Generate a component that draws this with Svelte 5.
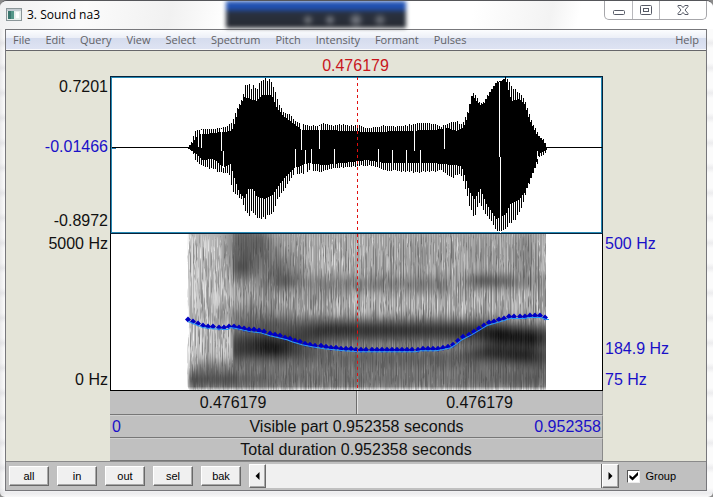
<script>
  import { onMount } from 'svelte';

  const menus = ['File', 'Edit', 'Query', 'View', 'Select', 'Spectrum', 'Pitch', 'Intensity', 'Formant', 'Pulses'];
  const zoomButtons = ['all', 'in', 'out', 'sel', 'bak'];

  let grouped = $state(true);
  let position = $state(50);
  let canvas;

  // Linear interpolation through a list of [x, value] pairs.
  function at(points, x) {
    if (x <= points[0][0]) return points[0][1];
    for (let i = 1; i < points.length; i++) {
      if (x <= points[i][0]) {
        const [x0, y0] = points[i - 1];
        const [x1, y1] = points[i];
        return y0 + ((y1 - y0) * (x - x0)) / (x1 - x0);
      }
    }
    return points[points.length - 1][1];
  }

  function randomSource(seed) {
    let s = seed;
    return () => {
      s = (s * 1664525 + 1013904223) >>> 0;
      return s / 4294967296;
    };
  }

  // Amplitude envelopes: peaks and the level between the peaks, above and below zero.
  const upperPeak = [[77, 70], [80, 64], [84, 53], [86, 52], [103, 51], [112, 50], [120, 46], [123, 38], [127, 28], [131, 21], [134, 7], [137, 6], [140, 10], [143, 5], [145, 13], [148, 5], [152, 0], [159, 0], [162, 10], [165, 17], [168, 27], [173, 36], [178, 36], [183, 43], [190, 46], [205, 49], [212, 45], [222, 48], [232, 46], [240, 48], [246, 47], [256, 51], [272, 48], [290, 49], [304, 46], [316, 45], [330, 49], [338, 45], [344, 43], [350, 47], [353, 43], [357, 31], [361, 15], [365, 19], [369, 26], [372, 25], [379, 13], [385, 4], [390, 4], [394, 0], [397, 3], [400, 9], [405, 12], [412, 20], [415, 27], [420, 43], [425, 53], [428, 59], [433, 63], [436, 70]];
  const upperBase = [[77, 71], [84, 62], [86, 57], [93, 57], [120, 54], [123, 47], [127, 32], [133, 20], [145, 24], [151, 18], [160, 18], [165, 30], [173, 40], [183, 47], [190, 53], [215, 53], [260, 55], [290, 54], [322, 53], [336, 51], [346, 54], [352, 50], [356, 40], [361, 19], [369, 28], [373, 26], [379, 15], [385, 6], [394, 1], [397, 13], [400, 24], [408, 22], [413, 27], [418, 43], [425, 57], [432, 64], [436, 72]];
  const lowerPeak = [[77, 71], [82, 77], [85, 86], [90, 89], [103, 94], [113, 97], [119, 99], [121, 118], [125, 118], [130, 123], [133, 133], [137, 139], [142, 139], [145, 143], [153, 144], [160, 140], [165, 127], [170, 118], [177, 107], [183, 97], [191, 98], [200, 94], [210, 96], [220, 92], [236, 91], [250, 89], [260, 89], [272, 94], [305, 96], [331, 94], [337, 101], [342, 102], [346, 98], [351, 100], [355, 117], [358, 130], [363, 142], [366, 132], [369, 127], [373, 137], [378, 144], [383, 150], [386, 156], [393, 156], [398, 147], [405, 144], [411, 129], [416, 112], [421, 99], [426, 87], [428, 81], [434, 77], [436, 72]];
  const lowerBase = [[77, 71], [87, 79], [91, 83], [102, 82], [112, 90], [119, 87], [123, 101], [128, 116], [133, 121], [137, 112], [142, 112], [145, 119], [153, 122], [160, 119], [167, 109], [173, 101], [183, 91], [197, 86], [213, 88], [240, 85], [256, 83], [272, 86], [322, 86], [350, 89], [355, 104], [358, 114], [363, 122], [369, 112], [375, 127], [385, 142], [394, 138], [398, 128], [408, 122], [413, 116], [418, 104], [423, 91], [428, 76], [436, 73]];

  const rnd = randomSource(11);
  let wave = '';
  for (let x = 77; x <= 435; x++) {
    const peak = x % 2 === 0;
    const weight = 0.8 + rnd() * 0.2;
    const uw = peak ? weight : 0;
    const top = at(upperBase, x) * (1 - uw) + at(upperPeak, x) * uw;
    const bottom = at(lowerBase, x) * (1 - uw) + at(lowerPeak, x) * uw;
    wave += `M${x} ${Math.round(top)}V${Math.max(Math.round(bottom), Math.round(top) + 1)}`;
  }

  const gaps = [
    [87, 53, 70], [90, 53, 71], [110, 52, 74], [112, 74, 91], [184, 72, 98], [190, 46, 73], [194, 73, 97],
    [200, 72, 94], [208, 49, 72], [223, 72, 92], [267, 72, 86], [281, 73, 90], [295, 73, 92],
    [303, 48, 74], [309, 73, 92], [333, 48, 72], [388, 5, 80], [389, 80, 156], [426, 74, 82]
  ];
  const gapPath = gaps.map(([x, a, b]) => `M${x} ${a}V${b}`).join('');

  // Pitch contour in plot coordinates.
  const contour = [[77, 85], [82, 87], [87, 89], [92, 91], [98, 92], [113, 93], [117, 93], [119, 91], [125, 92], [139, 95], [149, 96], [159, 99], [176, 103], [181, 105], [191, 108], [201, 110], [213, 112], [223, 113], [233, 114], [248, 115], [304, 115], [310, 114], [325, 114], [331, 113], [340, 111], [346, 107], [351, 103], [361, 98], [371, 92], [376, 89], [383, 87], [393, 84], [399, 82], [413, 82], [419, 81], [430, 81], [435, 83]];
  const dots = [];
  for (let x = 77; x <= 436; x += 5.1) dots.push([Math.round(x), Math.round(at(contour, x))]);
  const pitchLine = contour.map(([x, y]) => `${x},${y + 1}`).join(' ') + ' 438,84';
  const pitchDots = dots.map(([x, y]) => `M${x - 3} ${y}l3 -3l3 3l-3 3z`).join('');

  // Resonance bands: centre and strength along time, with a fixed spread.
  const bands = [
    { y: [[46, 105], [90, 107], [140, 99], [260, 99], [300, 100], [330, 103], [358, 105]], a: [[44, 0], [47, 75], [80, 105], [110, 85], [150, 80], [250, 80], [290, 90], [310, 125], [345, 120], [358, 85]], s: 8 },
    { y: [[46, 118], [100, 118], [160, 120], [270, 121], [300, 118], [358, 122]], a: [[44, 0], [47, 70], [90, 80], [150, 55], [270, 60], [300, 105], [340, 110], [358, 70]], s: 7 },
    { y: [[0, 145], [358, 145]], a: [[0, 50], [6, 98], [44, 98], [50, 70], [100, 55], [250, 50], [300, 60], [350, 70], [358, 50]], s: 8 },
    { y: [[46, 90], [110, 90], [300, 90], [358, 94]], a: [[44, 0], [47, 25], [80, 60], [140, 55], [300, 45], [358, 40]], s: 7 },
    { y: [[0, 130], [358, 132]], a: [[5, 0], [12, 40], [44, 40], [47, 30], [358, 30]], s: 6 },
    { y: [[90, 42], [130, 49], [250, 50], [300, 46], [358, 48]], a: [[85, 0], [110, 25], [150, 40], [255, 42], [268, 12], [285, 38], [330, 38], [358, 15]], s: 7 }
  ];
  const blobs = [
    [55, 10, 12, 22, 70], [54, 34, 8, 8, 40], [74, 6, 7, 12, 35], [88, 35, 16, 19, 55],
    [98, 48, 8, 6, 25], [60, 78, 26, 8, 35], [296, 46, 8, 6, 30], [314, 46, 8, 5, 20],
    [338, 20, 7, 16, 35], [226, 20, 22, 14, 15], [296, 18, 16, 14, 20], [128, 64, 14, 7, 20]
  ];

  onMount(() => {
    const g = canvas.getContext('2d');
    const image = g.createImageData(canvas.width, canvas.height);
    image.data.fill(255);
    const noise = randomSource(5);
    for (let x = 0; x < 359; x++) {
      const b = bands.map((k) => [at(k.y, x), at(k.a, x), k.s]);
      const near = blobs.filter((k) => Math.abs(x - k[0]) < k[2] * 3);
      const stripe = x > 45 ? (x % 5 === 0 || x % 5 === 2 ? 20 : -8) : 0;
      let streak = 0;
      let target = 0;
      for (let y = 0; y < 155; y++) {
        if (noise() < 0.13) target = (noise() + noise() - 1) * 60;
        streak += (target - streak) * 0.4;
        let dark = x > 45 ? 18 : 0;
        for (const [cy, amount, s] of b) dark += amount * Math.exp(-(((y - cy) / s) ** 2) / 2);
        for (const [bx, by, sx, sy, amount] of near) {
          dark += amount * Math.exp(-(((x - bx) / sx) ** 2 + ((y - by) / sy) ** 2) / 2);
        }
        const rough = Math.max(0.12, 1 - dark / 120);
        let v = 184 - dark + streak * rough + stripe * Math.max(0.3, rough);
        v = Math.max(12 + noise() * 10, v);
        if (x < 3) v += (3 - x) * 22;
        if (y > 151) v += (y - 151) * 22;
        const i = (y * canvas.width + x + 76) * 4;
        image.data[i] = image.data[i + 1] = image.data[i + 2] = v;
      }
    }
    g.putImageData(image, 0, 0);
  });
</script>

<div class="window">
  <header class="titlebar">
    <div class="glass"></div>
    <svg class="appicon" width="16" height="14" viewBox="0 0 16 14" aria-hidden="true">
      <rect x="0.5" y="0.5" width="15" height="12" fill="#e8efec" stroke="#8b9699" />
      <rect x="1" y="1" width="14" height="2" fill="#c4ccd2" />
      <rect x="2" y="3" width="6" height="8" fill="#559789" />
      <rect x="2" y="3" width="3" height="8" fill="#3b766f" />
      <rect x="10" y="4" width="3" height="6" fill="#fff" />
    </svg>
    <h1>3. Sound na3</h1>
    <div class="controls">
      <button aria-label="Minimize">
        <svg width="14" height="12" viewBox="0 0 14 12"><rect x="1.5" y="6.5" width="11" height="4" rx="1" fill="#fff" stroke="#565a66" /></svg>
      </button>
      <button aria-label="Restore">
        <svg width="14" height="12" viewBox="0 0 14 12"><rect x="1.5" y="1.5" width="11" height="9" rx="1" fill="#fff" stroke="#565a66" /><rect x="4.5" y="4.5" width="5" height="3" fill="#fff" stroke="#565a66" /></svg>
      </button>
      <button class="close" aria-label="Close">
        <svg width="14" height="12" viewBox="0 0 14 12"><path d="M2 1.5h3.2L7 3.6 8.8 1.5H12v1L9 6l3 3.500v1H8.800L7 8.400 5.200 10.500H2v-1L5 6 2 2.500z" fill="#fff" stroke="#565a66" stroke-linejoin="round" /></svg>
      </button>
    </div>
  </header>

  <main class="client">
    <nav class="menubar" aria-label="Menu">
      {#each menus as menu}
        <button>{menu}</button>
      {/each}
      <button class="help">Help</button>
    </nav>

    <section class="editor">
      <div class="cursor-time">0.476179</div>

      <div class="labels left wave-labels">
        <span>0.7201</span>
        <span class="blue mid">-0.01466</span>
        <span class="low">-0.8972</span>
      </div>
      <div class="plot waveform">
        <svg viewBox="0 0 491 156" preserveAspectRatio="none" role="img" aria-label="Waveform">
          <g shape-rendering="crispEdges" fill="none" transform="translate(0.5 0)">
            <path d="M0 70.500H491" stroke="#000" />
            <path d="M0 71.500H4" stroke="#2a7fb0" />
            <path d={wave} stroke="#000" />
            <path d={gapPath} stroke="#fff" />
          </g>
          <path d="M246.500 0V156" stroke="#e01010" stroke-dasharray="3 3" />
        </svg>
      </div>

      <div class="labels left spectrum-labels">
        <span>5000 Hz</span>
        <span class="end">0 Hz</span>
      </div>
      <div class="plot spectrogram">
        <canvas bind:this={canvas} width="491" height="155"></canvas>
        <svg viewBox="0 0 491 155" preserveAspectRatio="none" role="img" aria-label="Spectrogram with pitch contour">
          <path d={pitchDots} fill="#0000c4" />
          <polyline points={pitchLine} fill="none" stroke="#2f9cf4" stroke-width="1" transform="translate(0 1)" />
          <path d="M246.500 0V155" stroke="#e01010" stroke-dasharray="3 3" />
        </svg>
      </div>
      <div class="labels right spectrum-labels blue">
        <span>500 Hz</span>
        <span class="end">184.9 Hz</span>
        <span class="floor">75 Hz</span>
      </div>

      <div class="parts">
        <div class="row split">
          <button>0.476179</button>
          <button>0.476179</button>
        </div>
        <button class="row visible">
          <span class="blue">0</span>
          <span>Visible part 0.952358 seconds</span>
          <span class="blue finish">0.952358</span>
        </button>
        <button class="row">Total duration 0.952358 seconds</button>
      </div>
    </section>

    <footer class="toolbar">
      {#each zoomButtons as name}
        <button class="zoom">{name}</button>
      {/each}
      <div class="scroller">
        <button aria-label="Scroll left"><svg width="5" height="8" viewBox="0 0 5 8"><path d="M4.500 0v8L0.500 4z" /></svg></button>
        <input type="range" aria-label="Scroll position" bind:value={position} />
        <button aria-label="Scroll right"><svg width="5" height="8" viewBox="0 0 5 8"><path d="M0.500 0v8l4-4z" /></svg></button>
      </div>
      <label class="group">
        <input type="checkbox" bind:checked={grouped} />
        Group
      </label>
    </footer>
  </main>
</div>

<style>
  :global(body) {
    background: #8b8b8b;
  }

  .window {
    box-sizing: border-box;
    min-height: 100vh;
    display: flex;
    flex-direction: column;
    padding: 0 6px 6px 5px;
    border-top: 1px solid #55565a;
    border-radius: 7px 7px 5px 5px;
    overflow: hidden;
    background:
      linear-gradient(90deg, rgba(200, 200, 204, 0.35), transparent 5px),
      repeating-linear-gradient(#fbfbfb 0 12px, #ececee 17px, #fbfbfb 22px 25px);
    font-family: 'Open Sans', 'Noto Sans', sans-serif;
  }

  button {
    margin: 0;
    padding: 0;
    border: 0;
    background: none;
    color: inherit;
    font: inherit;
  }

  .titlebar {
    position: relative;
    display: flex;
    align-items: flex-start;
    height: 28px;
    margin: 0 -6px 0 -5px;
    padding-left: 6px;
    background: linear-gradient(102deg, #f1f1f2 0, #fbfbfb 12%, #f1f1f1 24%, #fff 32%, #fff 66%, #f3f3f3 77%, #fff 81%);
  }

  .glass {
    position: absolute;
    top: 0;
    left: 226px;
    width: 180px;
    height: 27px;
    background:
      radial-gradient(circle at 82px 19px, #808388 0, transparent 6px),
      radial-gradient(circle at 104px 19px, #858890 0, transparent 6px),
      radial-gradient(circle at 130px 19px, #858890 0, transparent 8px),
      radial-gradient(circle at 154px 19px, #777b82 0, transparent 7px),
      linear-gradient(#2455b4 0, #1f4fb1 8px, #293140 11px, #282b32 100%);
    filter: blur(2px);
  }

  .appicon {
    position: relative;
    margin-top: 7px;
  }

  h1 {
    position: relative;
    margin: 5px 0 0 5px;
    font-size: 12px;
    line-height: 18px;
    font-weight: 400;
    color: #000;
  }

  .controls {
    display: flex;
    height: 18px;
    margin: 0 6px 0 auto;
    border: 1px solid #a6a6aa;
    border-top: 0;
    border-radius: 0 0 5px 5px;
    background: rgba(255, 255, 255, 0.5);
  }

  .controls button {
    display: grid;
    place-items: center;
    width: 27px;
  }

  .controls button + button {
    border-left: 1px solid #b8b8bc;
  }

  .controls .close {
    width: 47px;
  }

  .client {
    flex: 1;
    display: flex;
    flex-direction: column;
    border: 1px solid #77777b;
    background: #c0c0c0;
  }

  .menubar {
    display: flex;
    gap: 15px;
    height: 20px;
    padding: 0 7px;
    border-bottom: 1px solid #66666a;
    box-shadow: inset 0 -1px #fafafc;
    background: linear-gradient(#fcfdfe 0, #eceff7 40%, #d5dcee 42%, #dfe4f3 100%);
    color: #626266;
    font-size: 11px;
    line-height: 20px;
  }

  .menubar .help {
    margin-left: auto;
  }

  .editor {
    flex: 1;
    display: grid;
    grid-template-columns: 104px minmax(0, 1fr) 103px;
    grid-template-rows: 25px minmax(0, 158fr) minmax(0, 157fr) auto;
    background: #e4e4d8;
    border-right: 1px solid #77777b;
    margin-right: -1px;
    font-family: 'Liberation Sans', Arial, sans-serif;
    font-size: 16px;
    line-height: 18px;
    color: #111;
  }

  .blue {
    color: #1a10c8;
  }

  .cursor-time {
    grid-column: 2;
    padding: 6px 2px 0 0;
    text-align: center;
    color: #c8161d;
  }

  .labels {
    display: flex;
    flex-direction: column;
    white-space: nowrap;
  }

  .left {
    grid-column: 1;
    align-items: flex-end;
    padding-right: 2px;
  }

  .right {
    grid-column: 3;
    padding-left: 2px;
  }

  .wave-labels {
    display: grid;
    grid-template-rows: 18px 42fr 18px 56fr 18px;
    justify-content: end;
    justify-items: end;
    padding-top: 2px;
    padding-bottom: 4px;
  }

  .mid {
    grid-row: 3;
  }

  .low {
    grid-row: 5;
  }

  .spectrum-labels {
    padding-top: 1px;
    padding-bottom: 2px;
  }

  .end {
    margin-top: auto;
  }

  .floor {
    margin-top: 13px;
  }

  .plot {
    grid-column: 2;
    position: relative;
    box-sizing: border-box;
    background: #fff;
    border: 1px solid #000;
  }

  .plot svg,
  .plot canvas {
    display: block;
    width: 100%;
    height: 100%;
  }

  .spectrogram svg {
    position: absolute;
    inset: 0;
  }

  .waveform {
    border-color: #06223a;
    box-shadow: inset 0 0 0 1px #2689b4;
  }

  .spectrogram {
    border-top: 0;
  }

  .parts {
    grid-column: 2;
    display: flex;
    flex-direction: column;
    background: #c0c0c0;
  }

  .row {
    box-sizing: border-box;
    height: 23px;
    border-top: 1px solid #d0d0d0;
    border-right: 1px solid #8a8a8a;
    border-bottom: 1px solid #777;
    line-height: 21px;
  }

  .split {
    display: grid;
    grid-template-columns: 1fr 1fr;
    height: 24px;
    border-top: 0;
  }

  .split button + button {
    border-left: 1px solid #6d6d6d;
    box-shadow: inset 1px 0 #e4e4e4;
  }

  .visible {
    display: grid;
    grid-template-columns: 1fr auto 1fr;
    padding: 0 1px 0 2px;
    text-align: left;
  }

  .finish {
    text-align: right;
  }

  .toolbar {
    display: flex;
    align-items: center;
    gap: 8px;
    height: 29px;
    padding: 0 30px 0 3px;
    border-top: 1px solid #8a8a8a;
    box-sizing: border-box;
    font-family: 'Liberation Sans', Arial, sans-serif;
    font-size: 11px;
    line-height: 16px;
    color: #000;
  }

  .zoom {
    box-sizing: border-box;
    width: 40px;
    height: 20px;
    flex: none;
  }

  .zoom,
  .scroller button {
    background: #f0f0f0;
    border: 1px solid;
    border-color: #fff #696969 #696969 #fff;
    box-shadow: inset -1px -1px #a8a8a8;
  }

  .scroller {
    flex: 1;
    display: flex;
    height: 24px;
    background: #f0f0f0;
  }

  .scroller button {
    display: grid;
    place-items: center;
    width: 17px;
    flex: none;
    box-sizing: border-box;
  }

  .scroller input {
    appearance: none;
    flex: 1;
    min-width: 0;
    margin: 0;
    background: #f0f0f0;
    border-right: 1px solid #696969;
  }

  .scroller input::-webkit-slider-thumb {
    appearance: none;
    width: 100%;
    height: 22px;
    background: #f0f0f0;
  }

  .group {
    display: flex;
    align-items: center;
    gap: 5px;
  }

  .group input {
    appearance: none;
    display: grid;
    place-items: center;
    box-sizing: border-box;
    width: 13px;
    height: 13px;
    margin: 0;
    border: 1px solid;
    border-color: #555 #eee #eee #555;
    background: #fff;
  }

  .group input:checked::before {
    content: '';
    width: 9px;
    height: 9px;
    background: #000;
    clip-path: polygon(0 35%, 35% 65%, 100% 0, 100% 35%, 35% 100%, 0 70%);
  }
</style>
